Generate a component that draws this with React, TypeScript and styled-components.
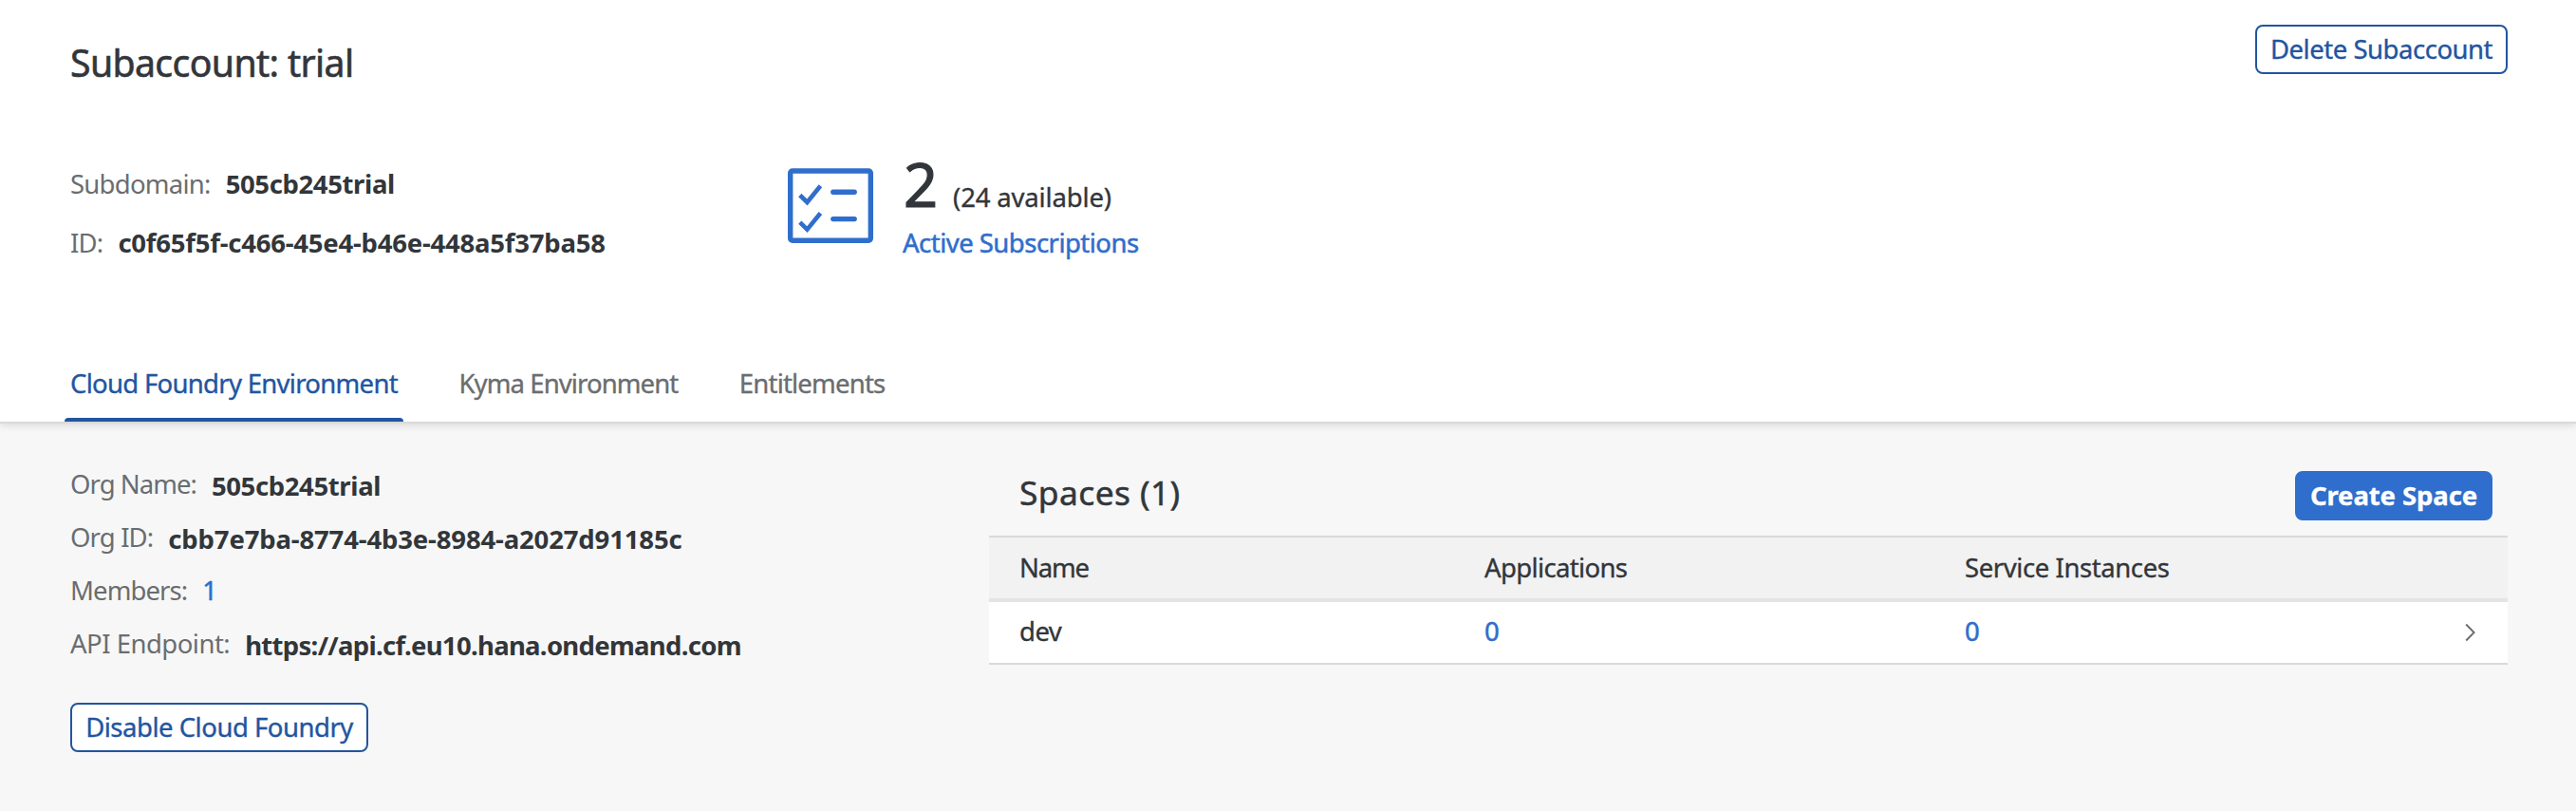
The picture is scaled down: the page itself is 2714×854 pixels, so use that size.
import React from "react";
import styled, { createGlobalStyle } from "styled-components";

const GlobalStyle = createGlobalStyle`
  * { box-sizing: border-box; }
  body {
    margin: 0;
    background: #f7f7f7;
    color: #32363a;
    font-family: "Noto Sans", "Open Sans", sans-serif;
    font-size: 27.5px;
    line-height: 32px;
    -webkit-text-stroke-width: 0.35px;
  }
`;

const blue = "#2f6ecc";
const darkBlue = "#22559f";

type Tracked = { $tracking?: number };

const Page = styled.div`
  display: flex;
  flex-direction: column;
  width: 2714px;
  height: 854px;
  overflow: hidden;
  white-space: nowrap;
`;

const Header = styled.header`
  position: relative;
  display: flex;
  flex-direction: column;
  height: 446px;
  padding: 26px 72px 0 74px;
  background: #fff;
  border-bottom: 2px solid #d9d9d9;
  box-shadow: 0 2px 8px rgba(0, 0, 0, 0.12);
`;

const TitleRow = styled.div`
  display: flex;
  justify-content: space-between;
  align-items: flex-start;
  height: 151px;
`;

const Title = styled.h1<Tracked>`
  margin: 16px 0 0;
  font-size: 39.2px;
  font-weight: 400;
  line-height: 48px;
  letter-spacing: ${(p) => p.$tracking ?? 0}px;
  -webkit-text-stroke-width: 0.6px;
`;

const Button = styled.button<Tracked & { $primary?: boolean; $width: number }>`
  display: flex;
  align-items: center;
  justify-content: center;
  width: ${(p) => p.$width}px;
  height: 52px;
  padding: 0 0 1px;
  border: 2px solid ${(p) => (p.$primary ? blue : darkBlue)};
  border-radius: 8px;
  background: ${(p) => (p.$primary ? blue : "#fff")};
  color: ${(p) => (p.$primary ? "#fff" : darkBlue)};
  font: inherit;
  font-weight: ${(p) => (p.$primary ? 700 : 400)};
  letter-spacing: ${(p) => p.$tracking ?? 0}px;
`;

const Summary = styled.div`
  display: grid;
  grid-template-columns: 756px auto;
  justify-content: start;
  height: 207px;
`;

const FieldList = styled.dl<{ $gap: number }>`
  display: flex;
  flex-direction: column;
  gap: ${(p) => p.$gap}px;
  margin: 0;
  padding-top: 1px;
`;

const Field = styled.div`
  display: flex;
  gap: 16px;
  height: 32px;
`;

const Label = styled.dt<Tracked>`
  color: #6a6d70;
  letter-spacing: ${(p) => p.$tracking ?? 0}px;
  -webkit-text-stroke-width: 0;
`;

const Value = styled.dd<Tracked & { $drop?: number }>`
  margin: 0;
  padding-top: ${(p) => p.$drop ?? 0}px;
  font-weight: 700;
  letter-spacing: ${(p) => p.$tracking ?? 0}px;
  -webkit-text-stroke-width: 0;
`;

const Link = styled.a<Tracked>`
  color: ${blue};
  font-weight: 400;
  letter-spacing: ${(p) => p.$tracking ?? 0}px;
  -webkit-text-stroke-width: 0.5px;
`;

const Kpi = styled.div`
  display: flex;
  align-items: flex-start;
  gap: 31px;
`;

const KpiText = styled.div`
  display: flex;
  flex-direction: column;
`;

const KpiFigure = styled.div`
  display: flex;
  align-items: baseline;
  gap: 16px;
  height: 78px;
  margin-top: -15px;
  padding-left: 1px;
`;

const KpiNumber = styled.span`
  font-size: 63px;
  line-height: 64px;
  -webkit-text-stroke-width: 1.2px;
`;

const Tracking = styled.span<Tracked>`
  letter-spacing: ${(p) => p.$tracking ?? 0}px;
`;

const Tabs = styled.nav`
  display: flex;
  gap: 52.5px;
  height: 60px;
  margin-left: -6px;
`;

const Tab = styled.a<Tracked & { $active?: boolean }>`
  display: flex;
  flex-direction: column;
  justify-content: space-between;
  color: ${(p) => (p.$active ? darkBlue : "#6a6d70")};
  letter-spacing: ${(p) => p.$tracking ?? 0}px;
  padding: 4px 6px 0;

  &::after {
    content: "";
    height: 4px;
    margin: 0 -6px;
    border-radius: 4px 4px 0 0;
    background: ${(p) => (p.$active ? darkBlue : "transparent")};
  }
`;

const Content = styled.main`
  display: grid;
  grid-template-columns: 968px 1600px;
  flex: 1;
  padding: 47px 72px 0 74px;
`;

const Environment = styled.section`
  display: flex;
  flex-direction: column;
  align-items: flex-start;
  gap: 46px;
`;

const Spaces = styled.section`
  display: flex;
  flex-direction: column;
  padding-top: 3px;
`;

const Toolbar = styled.div`
  display: flex;
  justify-content: space-between;
  height: 68px;
  padding: 0 16px 0 32px;
`;

const SpacesTitle = styled.h2<Tracked>`
  margin: 0;
  font-size: 35.4px;
  font-weight: 400;
  line-height: 44px;
  letter-spacing: ${(p) => p.$tracking ?? 0}px;
  -webkit-text-stroke-width: 0.5px;
`;

const Row = styled.div<{ $head?: boolean }>`
  display: grid;
  grid-template-columns: 490px 506px 1fr auto;
  align-items: center;
  height: ${(p) => (p.$head ? 70 : 66)}px;
  padding: 0 34px ${(p) => (p.$head ? 0 : 3)}px 32px;
  background: ${(p) => (p.$head ? "#f2f2f2" : "#fff")};
  border-bottom: ${(p) => (p.$head ? "4px solid #e4e4e4" : "2px solid #d9d9d9")};
  ${(p) => p.$head && "border-top: 2px solid #d9d9d9;"}
`;

const ChecklistIcon = () => (
  <svg width="90" height="80" viewBox="0 0 90 80" fill="none" stroke={blue}>
    <rect x="2.7" y="3" width="84.6" height="73.2" rx="2.2" strokeWidth="5.4" />
    <path d="M12.8 28.5 20.4 36 34.4 18.8M12.8 57.2 20.4 64.7 34.4 47.5" strokeWidth="4.6" />
    <path d="M47.8 25.3H70.2M47.8 53.6H70.2" strokeWidth="5.4" strokeLinecap="round" />
  </svg>
);

const Chevron = () => (
  <svg width="12" height="22" viewBox="0 0 12 22" fill="none" stroke="#6a6d70">
    <path d="M2.2 3.5 10.6 12 2.2 20.5" strokeWidth="1.9" />
  </svg>
);

export default function App() {
  return (
    <Page>
      <GlobalStyle />
      <Header>
        <TitleRow>
          <Title $tracking={-0.62}>Subaccount: trial</Title>
          <Button $width={266} $tracking={-0.47}>Delete Subaccount</Button>
        </TitleRow>
        <Summary>
          <FieldList $gap={30}>
            <Field>
              <Label $tracking={-0.75}>Subdomain:</Label>
              <Value $tracking={-0.38}>505cb245trial</Value>
            </Field>
            <Field>
              <Label $tracking={-0.8}>ID:</Label>
              <Value $tracking={-0.22}>c0f65f5f-c466-45e4-b46e-448a5f37ba58</Value>
            </Field>
          </FieldList>
          <Kpi>
            <ChecklistIcon />
            <KpiText>
              <KpiFigure>
                <KpiNumber>2</KpiNumber>
                <Tracking $tracking={-0.16}>(24 available)</Tracking>
              </KpiFigure>
              <Link $tracking={-0.52}>Active Subscriptions</Link>
            </KpiText>
          </Kpi>
        </Summary>
        <Tabs>
          <Tab $active $tracking={-0.7}>Cloud Foundry Environment</Tab>
          <Tab $tracking={-0.9}>Kyma Environment</Tab>
          <Tab $tracking={-0.8}>Entitlements</Tab>
        </Tabs>
      </Header>
      <Content>
        <Environment>
          <FieldList $gap={24}>
            <Field>
              <Label $tracking={-0.96}>Org Name:</Label>
              <Value $drop={2} $tracking={-0.38}>505cb245trial</Value>
            </Field>
            <Field>
              <Label $tracking={-0.87}>Org ID:</Label>
              <Value $drop={2} $tracking={-0.15}>cbb7e7ba-8774-4b3e-8984-a2027d91185c</Value>
            </Field>
            <Field>
              <Label $tracking={-0.9}>Members:</Label>
              <Value><Link>1</Link></Value>
            </Field>
            <Field>
              <Label $tracking={-0.51}>API Endpoint:</Label>
              <Value $drop={2} $tracking={-0.7}>https://api.cf.eu10.hana.ondemand.com</Value>
            </Field>
          </FieldList>
          <Button $width={314} $tracking={-0.48}>Disable Cloud Foundry</Button>
        </Environment>
        <Spaces>
          <Toolbar>
            <SpacesTitle $tracking={0.4}>Spaces (1)</SpacesTitle>
            <Button $primary $width={208} $tracking={-0.1}>Create Space</Button>
          </Toolbar>
          <Row $head>
            <Tracking $tracking={-1.2}>Name</Tracking>
            <Tracking $tracking={-0.64}>Applications</Tracking>
            <Tracking $tracking={-0.42}>Service Instances</Tracking>
          </Row>
          <Row>
            <Tracking $tracking={-0.5}>dev</Tracking>
            <Link>0</Link>
            <Link>0</Link>
            <Chevron />
          </Row>
        </Spaces>
      </Content>
    </Page>
  );
}
